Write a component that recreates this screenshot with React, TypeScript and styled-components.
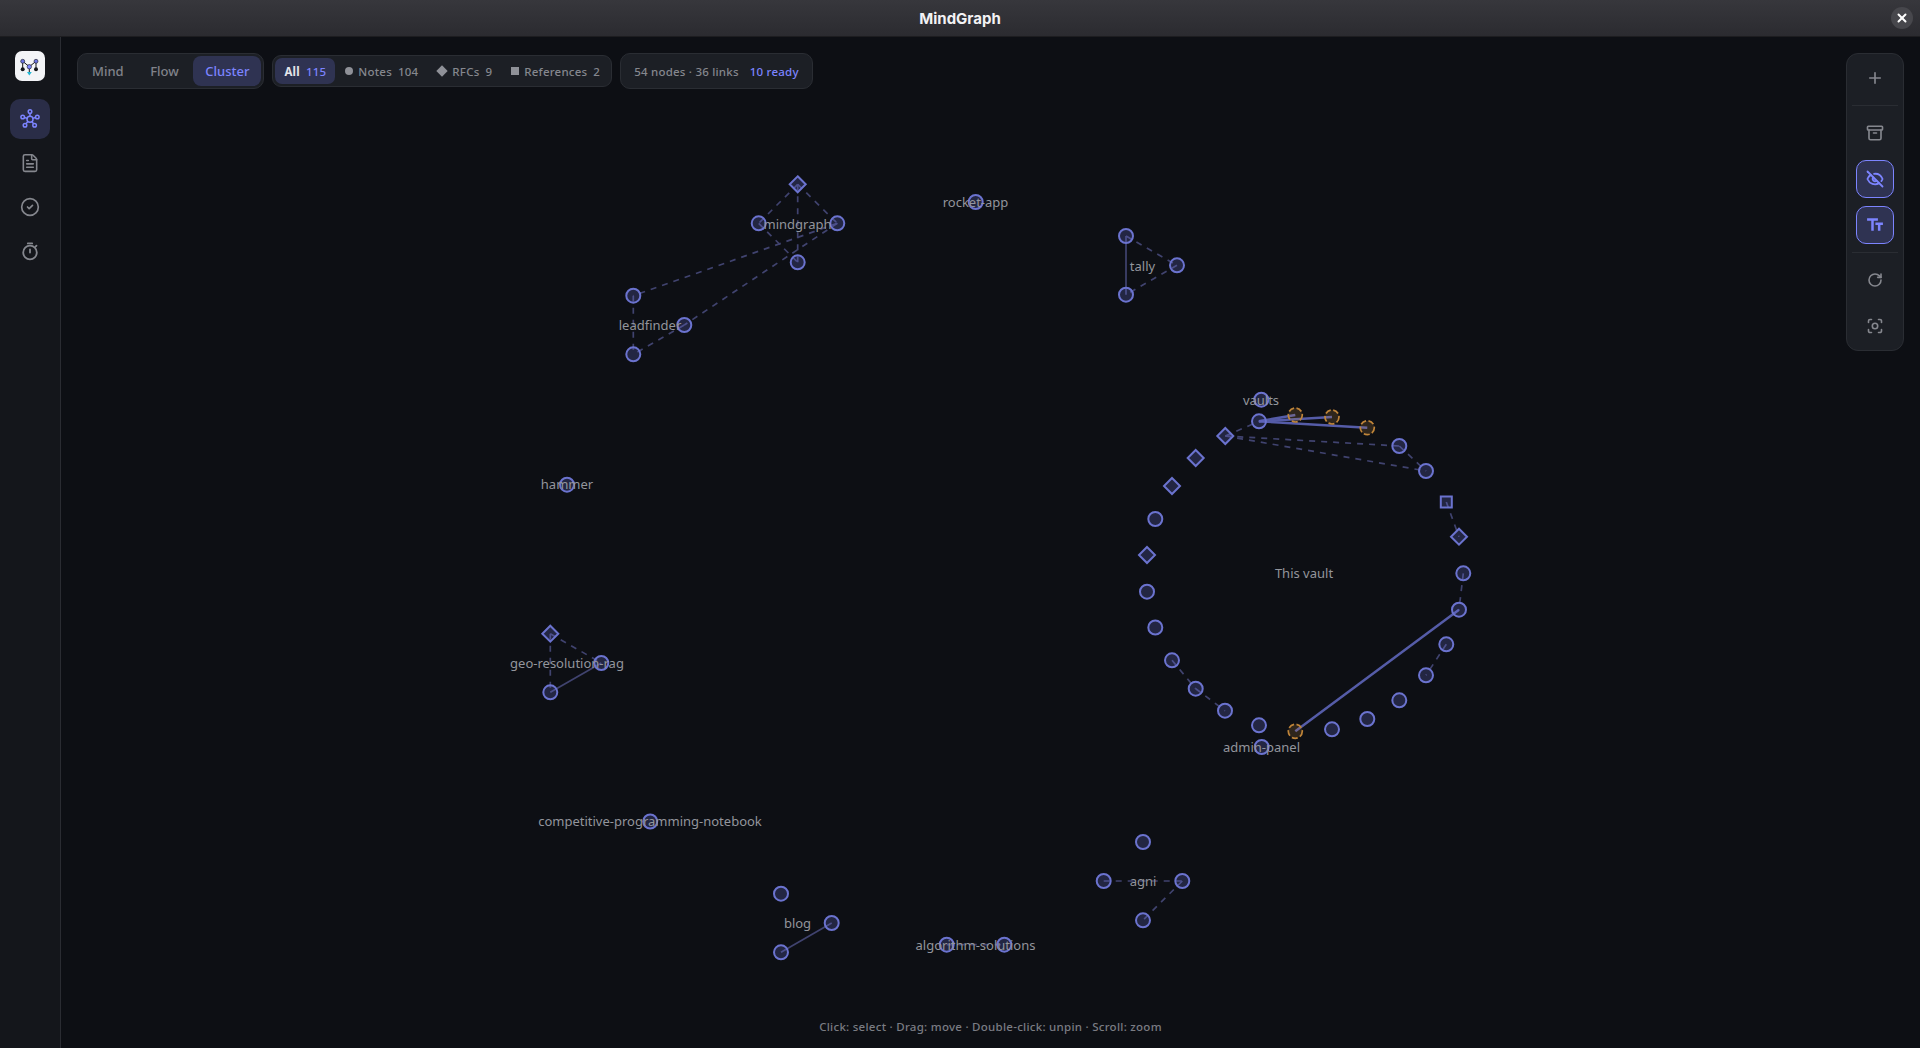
import React from 'react';
import styled, { createGlobalStyle } from 'styled-components';
import { Plus, Archive, EyeOff, RotateCw, FileText, CircleCheck, X } from 'lucide-react';
import { MdTextFields } from 'react-icons/md';

const GlobalStyle = createGlobalStyle`
  html, body, #root { margin: 0; height: 100%; }
  body {
    background: #0d0f14;
    font-family: "Noto Sans", "Liberation Sans", sans-serif;
    overflow: hidden;
  }
  * { box-sizing: border-box; }
`;

const Shell = styled.div`
  display: flex;
  flex-direction: column;
  height: 100vh;
`;

const TitleBar = styled.header`
  position: relative;
  flex: 0 0 37px;
  display: flex;
  align-items: center;
  justify-content: center;
  background: linear-gradient(#37373c, #2b2b30);
  border-bottom: 1px solid #1d1d20;
  color: #f2f2f4;
  font-family: Inter, "Liberation Sans", sans-serif;
  font-size: 15px;
  font-weight: 700;
`;

const CloseButton = styled.button`
  position: absolute;
  right: 7px;
  top: 7px;
  width: 22px;
  height: 22px;
  padding: 0;
  border: 0;
  border-radius: 50%;
  background: #47474c;
  color: #fff;
  display: flex;
  align-items: center;
  justify-content: center;
`;

const Body = styled.div`
  flex: 1;
  display: flex;
  min-height: 0;
`;

const Sidebar = styled.nav`
  flex: 0 0 61px;
  display: flex;
  flex-direction: column;
  align-items: center;
  gap: 4px;
  padding-top: 14px;
  background: #14161b;
  border-right: 1px solid #2a2c32;
`;

const Logo = styled.div`
  width: 30px;
  height: 30px;
  margin-bottom: 14px;
  border-radius: 7px;
  background: #f3f4f7;
  display: flex;
`;

const NavItem = styled.button<{ $active?: boolean }>`
  width: 40px;
  height: 40px;
  padding: 0;
  border: 0;
  border-radius: 10px;
  background: ${(p) => (p.$active ? '#2a2d47' : 'transparent')};
  color: ${(p) => (p.$active ? '#7c84ff' : '#85878e')};
  display: flex;
  align-items: center;
  justify-content: center;
`;

const Canvas = styled.main`
  position: relative;
  flex: 1;
  min-width: 0;
  background: #0d0f14;
`;

const Graph = styled.svg`
  display: block;
  width: 100%;
  height: 100%;
`;

const Edge = styled.line<{ $kind: string }>`
  stroke: ${(p) => (p.$kind === 'strong' ? '#555ca8' : '#40436f')};
  stroke-width: ${(p) => (p.$kind === 'strong' ? 2.5 : 1.7)};
  stroke-dasharray: ${(p) => (p.$kind === 'dash' ? '6 6' : 'none')};
`;

const nodeShape = `
  fill: rgba(124, 132, 255, 0.2);
  stroke: #6b73cf;
  stroke-width: 2;
`;

const CircleNode = styled.circle<{ $ready?: boolean }>`
  ${nodeShape}
  ${(p) =>
    p.$ready &&
    `fill: rgba(205, 145, 65, 0.18);
     stroke: #c08539;
     stroke-width: 1.7;
     stroke-dasharray: 6 2.5;`}
`;

const DiamondNode = styled.polygon`
  ${nodeShape}
`;

const SquareNode = styled.rect`
  ${nodeShape}
`;

const Label = styled.text`
  fill: #93959c;
  font-family: "Noto Sans", sans-serif;
  font-size: 13px;
  text-anchor: middle;
  dominant-baseline: central;
`;

const TopBar = styled.div`
  position: absolute;
  left: 16px;
  top: 16px;
  display: flex;
  align-items: center;
  gap: 8px;
`;

const Group = styled.div`
  display: flex;
  align-items: center;
  background: #1c1f25;
  border: 1px solid #2a2d33;
`;

const ModeGroup = styled(Group)`
  height: 36px;
  padding: 2px;
  gap: 2.5px;
  border-radius: 10px;
`;

const ModeButton = styled.button<{ $active?: boolean }>`
  height: 30px;
  padding: 0 12px;
  border: 0;
  border-radius: 8px;
  background: ${(p) => (p.$active ? '#2f3352' : 'transparent')};
  color: ${(p) => (p.$active ? '#7c84ff' : '#80828a')};
  font: 500 13px "Noto Sans", sans-serif;
`;

const FilterGroup = styled(Group)`
  height: 32px;
  padding: 2px;
  gap: 1px;
  border-radius: 9px;
`;

const FilterChip = styled.div<{ $active?: boolean }>`
  height: 26px;
  display: flex;
  align-items: center;
  gap: 5px;
  padding: 0 9px;
  border-radius: 7px;
  background: ${(p) => (p.$active ? '#2f3352' : 'transparent')};
  color: ${(p) => (p.$active ? '#e4e5ea' : '#85878e')};
  font-size: 11.5px;
  font-weight: ${(p) => (p.$active ? 700 : 500)};
  letter-spacing: 0.22px;
`;

const ChipCount = styled.span<{ $active?: boolean }>`
  margin-left: 1px;
  color: ${(p) => (p.$active ? '#7c84ff' : '#85878e')};
  font-weight: 500;
`;

const Dot = styled.i`
  width: 8px;
  height: 8px;
  border-radius: 50%;
  background: #8f9198;
`;

const DiamondMark = styled.i`
  width: 8px;
  height: 8px;
  margin: 0 1px;
  transform: rotate(45deg);
  background: #8f9198;
`;

const SquareMark = styled.i`
  width: 8px;
  height: 8px;
  background: #8f9198;
`;

const StatsGroup = styled(Group)`
  height: 36px;
  padding: 0 13px;
  gap: 11px;
  border-radius: 10px;
  color: #85878e;
  font-size: 11.5px;
  font-weight: 500;
  letter-spacing: 0.22px;
`;

const Ready = styled.span`
  color: #7c84ff;
`;

const ToolPanel = styled.div`
  position: absolute;
  right: 16px;
  top: 16px;
  width: 58px;
  display: flex;
  flex-direction: column;
  align-items: center;
  gap: 8px;
  padding: 5px;
  background: #1c1f25;
  border: 1px solid #2a2d33;
  border-radius: 12px;
`;

const ToolButton = styled.button<{ $active?: boolean }>`
  width: 38px;
  height: 38px;
  padding: 0;
  border: 1px solid ${(p) => (p.$active ? '#7c84ff' : 'transparent')};
  border-radius: 10px;
  background: ${(p) => (p.$active ? '#2f3352' : 'transparent')};
  color: ${(p) => (p.$active ? '#7c84ff' : '#85878e')};
  display: flex;
  align-items: center;
  justify-content: center;
`;

const ToolSeparator = styled.div`
  align-self: stretch;
  height: 1px;
  background: #2a2d33;
`;

const Hint = styled.div`
  position: absolute;
  left: 0;
  right: 0;
  bottom: 14px;
  text-align: center;
  color: #7a7c83;
  font-size: 11.5px;
  font-weight: 500;
  letter-spacing: 0.27px;
`;

type NodeKind = 'circle' | 'diamond' | 'square' | 'ready';
type GraphNode = [number, number, NodeKind?];

const nodes: GraphNode[] = [
  [797.7, 184.3, 'diamond'], [758.7, 223.3], [837.3, 223.3], [797.7, 262.3],
  [633.3, 295.7], [684.3, 325], [633.3, 354.3],
  [975.7, 202],
  [1126, 236], [1177, 265.3], [1126, 294.7],
  [567, 484.7],
  [550.3, 633.7, 'diamond'], [601.3, 663], [550.3, 692.3],
  [650.2, 821.5],
  [781, 893.7], [831.7, 923], [781, 952.3],
  [946.7, 944.7], [1004.3, 944.7],
  [1143, 842], [1103.7, 881], [1182.3, 881], [1143, 920.3],
  // this vault ring
  [1261.3, 399.7], [1259, 421.3],
  [1295.3, 415, 'ready'], [1332, 417, 'ready'], [1367.3, 427.7, 'ready'],
  [1225.3, 436, 'diamond'], [1399.3, 446], [1426, 471],
  [1446.3, 502, 'square'], [1459, 536.7, 'diamond'],
  [1463.3, 573.3], [1459, 609.7], [1446.3, 644.3], [1426, 675.3],
  [1399.3, 700.3], [1367.3, 719], [1332, 729.3],
  [1295.3, 731.3, 'ready'], [1259, 725.3], [1261.7, 747],
  [1225, 710.7], [1195.7, 688.7], [1172, 660.3], [1155.3, 627.5],
  [1147, 591.7], [1147, 555, 'diamond'], [1155.3, 519],
  [1172, 486, 'diamond'], [1195.7, 458, 'diamond'],
];

const edges: [number, number, number, number, string][] = [
  [797.7, 184.3, 758.7, 223.3, 'dash'], [797.7, 184.3, 837.3, 223.3, 'dash'],
  [797.7, 184.3, 797.7, 262.3, 'dash'], [758.7, 223.3, 797.7, 262.3, 'dash'],
  [837.3, 223.3, 633.3, 295.7, 'dash'], [837.3, 223.3, 684.3, 325, 'dash'],
  [684.3, 325, 633.3, 354.3, 'dash'], [633.3, 295.7, 633.3, 354.3, 'dash'],
  [1126, 236, 1126, 294.7, 'solid'], [1126, 236, 1177, 265.3, 'dash'], [1177, 265.3, 1126, 294.7, 'dash'],
  [550.3, 633.7, 601.3, 663, 'dash'], [550.3, 633.7, 550.3, 692.3, 'dash'], [601.3, 663, 550.3, 692.3, 'solid'],
  [831.7, 923, 781, 952.3, 'solid'],
  [946.7, 944.7, 1004.3, 944.7, 'dash'],
  [1103.7, 881, 1182.3, 881, 'dash'], [1182.3, 881, 1143, 920.3, 'dash'],
  [1259, 421.3, 1295.3, 415, 'strong'], [1259, 421.3, 1332, 417, 'strong'], [1259, 421.3, 1367.3, 427.7, 'strong'],
  [1225.3, 436, 1259, 421.3, 'dash'], [1225.3, 436, 1399.3, 446, 'dash'], [1225.3, 436, 1426, 471, 'dash'],
  [1399.3, 446, 1426, 471, 'dash'],
  [1446.3, 502, 1459, 536.7, 'dash'], [1463.3, 573.3, 1459, 609.7, 'dash'],
  [1459, 609.7, 1295.3, 731.3, 'strong'], [1446.3, 644.3, 1426, 675.3, 'dash'],
  [1172, 660.3, 1195.7, 688.7, 'dash'], [1195.7, 688.7, 1225, 710.7, 'dash'],
];

const labels: [string, number, number][] = [
  ['mindgraph', 797.5, 223.5], ['leadfinder', 650, 325], ['rocket-app', 975.5, 202],
  ['tally', 1142.5, 266], ['hammer', 567, 484], ['geo-resolution-rag', 567, 663],
  ['competitive-programming-notebook', 650, 821], ['blog', 797.5, 923],
  ['algorithm-solutions', 975.5, 945], ['agni', 1143, 881],
  ['vaults', 1261, 400], ['This vault', 1304, 573], ['admin-panel', 1261.5, 747],
];

const renderNode = ([x, y, kind]: GraphNode, i: number) => {
  if (kind === 'diamond') {
    return <DiamondNode key={i} points={`${x},${y - 8} ${x + 8},${y} ${x},${y + 8} ${x - 8},${y}`} />;
  }
  if (kind === 'square') {
    return <SquareNode key={i} x={x - 5.5} y={y - 5.5} width={11} height={11} />;
  }
  return <CircleNode key={i} cx={x} cy={y} r={7} $ready={kind === 'ready'} />;
};

const ClusterIcon = () => (
  <svg width="24" height="24" viewBox="0 0 24 24" fill="none" stroke="currentColor" strokeWidth="1.5">
    <circle cx="12" cy="12.3" r="3" />
    <circle cx="12" cy="4.6" r="1.8" />
    <circle cx="19.3" cy="10" r="1.8" />
    <circle cx="16.6" cy="18.3" r="1.8" />
    <circle cx="7" cy="18.3" r="1.8" />
    <circle cx="4.7" cy="10" r="1.8" />
    <path d="M12 6.4v2.9M17.6 10.5l-2.8 .9M15.6 16.8l-1.7-2.2M8 16.8l1.9-2.3M6.4 10.5l2.8 .9" />
  </svg>
);

const StopwatchIcon = () => (
  <svg width="20" height="20" viewBox="0 0 20 20" fill="none" stroke="currentColor" strokeWidth="1.8" strokeLinecap="round">
    <circle cx="10" cy="11.5" r="6.8" />
    <path d="M7.8 2.4h4.4M10 8.5v3M15.5 5.7l1-1" />
  </svg>
);

const CaptureIcon = () => (
  <svg width="18" height="18" viewBox="0 0 18 18" fill="none" stroke="currentColor" strokeWidth="1.6" strokeLinecap="round">
    <path d="M2.5 5.5V4a1.5 1.5 0 0 1 1.5-1.5h1.5M12.5 2.5H14A1.5 1.5 0 0 1 15.5 4v1.5M15.5 12.5V14a1.5 1.5 0 0 1-1.5 1.5h-1.5M5.5 15.5H4A1.5 1.5 0 0 1 2.5 14v-1.5" />
    <circle cx="9" cy="9" r="2.7" />
  </svg>
);

const LogoMark = () => (
  <svg width="30" height="30" viewBox="0 0 30 30">
    <path d="M7.7 10.3L14.3 15.7L21 10.3M7.7 10.3V18.3M21 10.3V18.3M14.3 15.7V22.3" fill="none" stroke="#15171c" strokeWidth="1" />
    <circle cx="7.7" cy="10.3" r="2" fill="#6b73e0" stroke="#15171c" strokeWidth=".6" />
    <circle cx="21" cy="10.3" r="2" fill="#6b73e0" stroke="#15171c" strokeWidth=".6" />
    <circle cx="14.3" cy="15.7" r="2.2" fill="#7c84ff" stroke="#15171c" strokeWidth=".6" />
    <circle cx="7.7" cy="18.3" r="2" fill="#15171c" />
    <circle cx="21" cy="18.3" r="2" fill="#15171c" />
    <polygon points="12,21 16.8,21 14.3,24.6" fill="#22b8d6" />
  </svg>
);

export default function App() {
  return (
    <Shell>
      <GlobalStyle />
      <TitleBar>
        MindGraph
        <CloseButton aria-label="Close">
          <X size={14} strokeWidth={3.4} />
        </CloseButton>
      </TitleBar>
      <Body>
        <Sidebar>
          <Logo><LogoMark /></Logo>
          <NavItem $active><ClusterIcon /></NavItem>
          <NavItem><FileText size={20} strokeWidth={1.9} /></NavItem>
          <NavItem><CircleCheck size={20} strokeWidth={2} /></NavItem>
          <NavItem><StopwatchIcon /></NavItem>
        </Sidebar>
        <Canvas>
          <Graph viewBox="61 37 1859 1011">
            {edges.map(([x1, y1, x2, y2, kind], i) => (
              <Edge key={i} x1={x1} y1={y1} x2={x2} y2={y2} $kind={kind} />
            ))}
            {nodes.map(renderNode)}
            {labels.map(([text, x, y]) => (
              <Label key={text} x={x} y={y}>{text}</Label>
            ))}
          </Graph>

          <TopBar>
            <ModeGroup>
              <ModeButton>Mind</ModeButton>
              <ModeButton>Flow</ModeButton>
              <ModeButton $active>Cluster</ModeButton>
            </ModeGroup>
            <FilterGroup>
              <FilterChip $active>All <ChipCount $active>115</ChipCount></FilterChip>
              <FilterChip><Dot />Notes <ChipCount>104</ChipCount></FilterChip>
              <FilterChip><DiamondMark />RFCs <ChipCount>9</ChipCount></FilterChip>
              <FilterChip><SquareMark />References <ChipCount>2</ChipCount></FilterChip>
            </FilterGroup>
            <StatsGroup>
              <span>54 nodes · 36 links</span>
              <Ready>10 ready</Ready>
            </StatsGroup>
          </TopBar>

          <ToolPanel>
            <ToolButton><Plus size={18} strokeWidth={2.2} /></ToolButton>
            <ToolSeparator />
            <ToolButton><Archive size={18} strokeWidth={2.2} /></ToolButton>
            <ToolButton $active><EyeOff size={18} strokeWidth={2.4} /></ToolButton>
            <ToolButton $active><MdTextFields size={20} /></ToolButton>
            <ToolSeparator />
            <ToolButton><RotateCw size={16} strokeWidth={2.4} /></ToolButton>
            <ToolButton><CaptureIcon /></ToolButton>
          </ToolPanel>

          <Hint>Click: select · Drag: move · Double-click: unpin · Scroll: zoom</Hint>
        </Canvas>
      </Body>
    </Shell>
  );
}
